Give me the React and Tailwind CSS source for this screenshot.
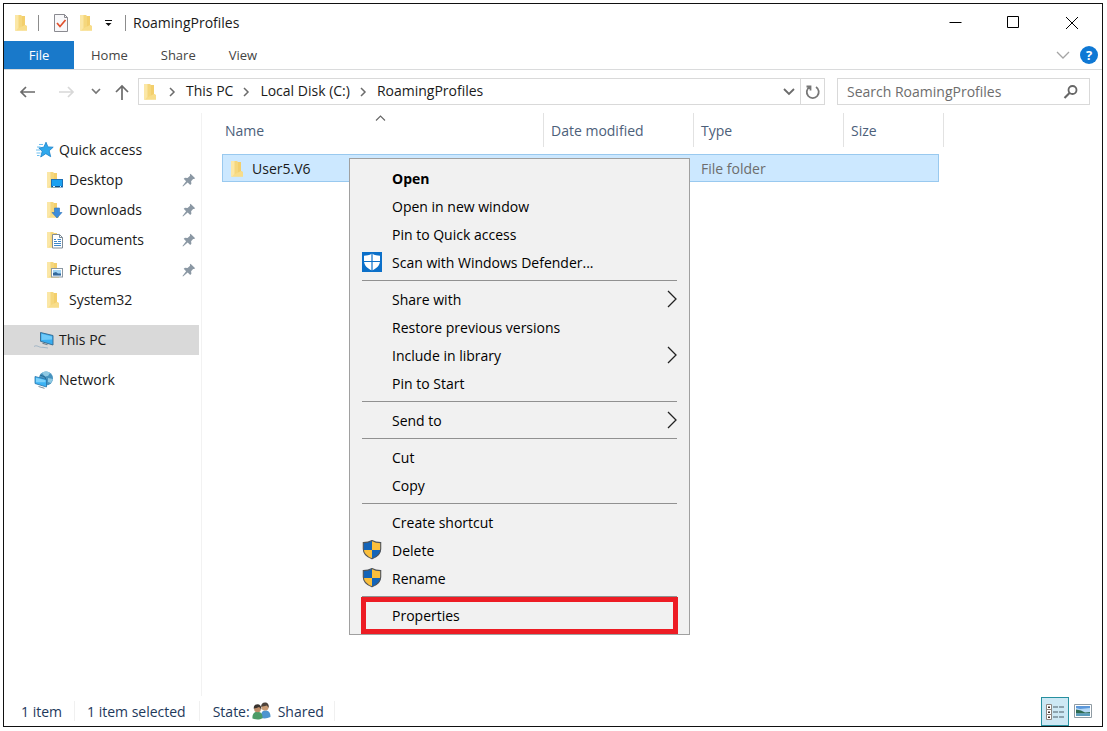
import React from 'react';

const FolderShape = () => (
  <>
    <path d="M1 1h6l1 1h3v9l2 1v4.500H1z" fill="#f5d77d" />
    <path d="M1 1h3.500v15.500H1z" fill="#fbe7a6" />
    <path d="M8 2h3v9.500L9.500 14 8 16.500z" fill="#f3cf6c" />
    <path d="M4 14.500l7-3.500 2 1.200v4.300H2z" fill="#f8dd8a" />
  </>
);

const Folder = () => (
  <svg width="14" height="18" viewBox="0 0 14 18" className="shrink-0" aria-hidden="true">
    <FolderShape />
  </svg>
);

const overlays = {
  desktop: (
    <g>
      <rect x="5.500" y="8.500" width="11" height="7.500" fill="#1ba1f0" stroke="#1c6fb5" />
      <path d="M6 15.500h10" stroke="#0d4f8b" />
      <path d="M7 15.500h2M14 15.500h1" stroke="#d6efff" />
    </g>
  ),
  downloads: <path d="M8.500 7h5v4.500H16L11 17 6 11.500h2.500z" fill="#3c8ddc" stroke="#2c70b8" strokeWidth=".6" />,
  documents: (
    <g>
      <path d="M6.500 3.500h7l3 3v10.500h-10z" fill="#fff" stroke="#7f8c97" />
      <path d="M13.500 3.500v3h3" fill="none" stroke="#7f8c97" />
      <path d="M8 8.500h2M11.500 8.500H15M8 10.500h3M12 10.500h3M8 12.500h7M8 14.500h7" stroke="#3c86c8" />
    </g>
  ),
  pictures: (
    <g>
      <rect x="5.500" y="7.500" width="11" height="8.500" fill="#fff" stroke="#8b98a3" />
      <path d="M7 9h8v5.500H7z" fill="#9fd3f4" />
      <path d="M7 12l3-1 2 1.500h3v2H7z" fill="#34699c" />
    </g>
  ),
};

const NavFolder = ({ kind }) => (
  <svg width="18" height="18" viewBox="0 0 18 18" className="shrink-0" aria-hidden="true">
    <FolderShape />
    {overlays[kind]}
  </svg>
);

const QuickStar = () => (
  <svg width="18" height="18" viewBox="0 0 18 18" className="shrink-0" aria-hidden="true">
    <path d="M10 1.200l1.900 4.700 5.300.3-4 3.600 1.500 5.900-4.900-3L4.700 16l1.500-5.700L2.800 7l5-.8z" fill="#2fa8ec" stroke="#1c80c8" strokeWidth=".8" />
    <path d="M3 3.500h4M1 6h3.500M0 9h4M.5 12h4M1 14.500h2.500" stroke="#5bb8ee" strokeWidth=".9" />
  </svg>
);

const ThisPc = () => (
  <svg width="20" height="18" viewBox="0 0 20 18" className="shrink-0" aria-hidden="true">
    <path d="M6.500 1.500l12.500 3v9.500L6.500 10.300z" fill="#38adf0" stroke="#31688f" strokeWidth=".9" />
    <path d="M7.500 2.800l10.500 2.600v3L7.500 9z" fill="#6fcaf9" />
    <path d="M8.500 12.200l5 1.500" stroke="#6d7d89" strokeWidth="1.200" />
    <path d="M0 15.500c3-2.200 5 1.500 9 .8l5 .7" fill="none" stroke="#a3b6c6" />
  </svg>
);

const Network = () => (
  <svg width="20" height="20" viewBox="0 0 20 20" className="shrink-0" aria-hidden="true">
    <circle cx="12" cy="8.500" r="7" fill="#4793bf" />
    <path d="M8 3c2-2 6-2 8 0l-2 3-3 .5zM14 8l5 1-2 4-3-1z" fill="#8fc9e3" />
    <path d="M6 5l5 2 1 3" stroke="#276a94" fill="none" />
    <path d="M1 6.500l11.500 3v7.500L1 13.500z" fill="#3db3f4" stroke="#2874a8" strokeWidth=".8" />
    <path d="M2 7.800l9.500 2.500v2L2 12.300z" fill="#7dd2fb" />
    <path d="M4.500 16.500l6 1.800" stroke="#7b8d9a" />
  </svg>
);

const Pin = () => (
  <svg width="14" height="14" viewBox="0 0 14 14" className="shrink-0" aria-hidden="true">
    <path d="M8.500.8l4.700 4.400-1.300.9-.8-.2-2 2.300.3 2.600-1.200 1.300-2.500-2.500L1 13.500l-.5-.6 3.600-4.700L1.700 5.700l1.300-1 2.500.2 2.600-2.100-.3-1.100z" fill="#8b98a4" />
  </svg>
);

const Chevron = ({ d, w, h, stroke = '#6b6b6b', sw = 1.5 }) => (
  <svg width={w} height={h} viewBox={`0 0 ${w} ${h}`} className="shrink-0" fill="none" stroke={stroke} strokeWidth={sw} aria-hidden="true">
    <path d={d} />
  </svg>
);

const Shield = () => (
  <svg width="20" height="20" viewBox="0 0 20 20" aria-hidden="true">
    <clipPath id="uac">
      <path d="M10 .5C7.500 2 4.500 2.600 1.300 2.600V9c0 5.200 3.900 8 8.700 9.800C14.800 17 18.700 14.200 18.700 9V2.600C15.500 2.600 12.500 2 10 .5z" />
    </clipPath>
    <g clipPath="url(#uac)">
      <path d="M0 0h10v10H0zM10 10h10v10H10z" fill="#1464b8" />
      <path d="M10 0h10v10H10zM0 10h10v10H0z" fill="#fbbf3c" />
    </g>
    <path d="M10 .5C7.500 2 4.500 2.600 1.300 2.600V9c0 5.200 3.900 8 8.700 9.800C14.800 17 18.700 14.200 18.700 9V2.600C15.500 2.600 12.500 2 10 .5z" fill="none" stroke="#51555a" strokeWidth="1.100" />
  </svg>
);

const Defender = () => (
  <svg width="20" height="20" viewBox="0 0 20 20" aria-hidden="true">
    <path d="M0 0h20v20H0z" fill="#0c70c9" />
    <path d="M10 1.500C8 3 5.200 3.700 2 3.700V9c0 4.500 3.500 7.600 8 9.500 4.500-1.900 8-5 8-9.500V3.700C14.800 3.700 12 3 10 1.500z" fill="#fff" />
    <path d="M10 1v18M2 9.500h16" stroke="#0c70c9" strokeWidth="1.200" />
  </svg>
);

const People = () => (
  <svg width="19" height="18" viewBox="0 0 19 18" className="shrink-0" aria-hidden="true">
    <path d="M9 16c-.5-5 1-7.500 4.500-7.500S18.500 11 18.500 15c-3 1.500-6 1.800-9.500 1z" fill="#4d94cf" />
    <circle cx="13" cy="5" r="3.600" fill="#c99b74" />
    <path d="M9.200 5c-.2-3 1.300-4.600 3.800-4.600S17 2 16.800 6c-1-1.500-1.300-2-2.300-2.500-2 .8-3.500.5-5.300 1.500z" fill="#4c423b" />
    <path d="M.5 16.500C0 12 2 9.800 5.500 9.800s5.300 2.500 5 6.500c-3 1.700-7 1.500-10 .2z" fill="#4c9a66" />
    <circle cx="5.500" cy="6.800" r="3.500" fill="#bd8d68" />
    <path d="M1.800 6.800C1.500 4 3 2.300 5.500 2.300S9.500 4 9.300 7.500C8.500 6.300 8 5.500 7 5c-1.500 1-3.500.8-5.200 1.800z" fill="#39332f" />
  </svg>
);

const navItems = [
  { label: 'Desktop', kind: 'desktop', pinned: true },
  { label: 'Downloads', kind: 'downloads', pinned: true },
  { label: 'Documents', kind: 'documents', pinned: true },
  { label: 'Pictures', kind: 'pictures', pinned: true },
  { label: 'System32', kind: 'plain', pinned: false },
];

const menuGroups = [
  [
    { label: 'Open', bold: true },
    { label: 'Open in new window' },
    { label: 'Pin to Quick access' },
    { label: 'Scan with Windows Defender...', icon: <Defender /> },
  ],
  [
    { label: 'Share with', sub: true },
    { label: 'Restore previous versions' },
    { label: 'Include in library', sub: true },
    { label: 'Pin to Start' },
  ],
  [{ label: 'Send to', sub: true }],
  [{ label: 'Cut' }, { label: 'Copy' }],
  [
    { label: 'Create shortcut' },
    { label: 'Delete', icon: <Shield /> },
    { label: 'Rename', icon: <Shield /> },
  ],
  [{ label: 'Properties', marked: true }],
];

function TitleBar() {
  return (
    <header className="flex h-[37px] items-center">
      <div className="flex flex-1 items-center pl-2.5">
        <Folder />
        <span className="ml-2.5 h-4 w-px bg-[#8c8c8c]" />
        <button type="button" aria-label="Properties" className="ml-3.5">
          <svg width="16" height="18" viewBox="0 0 16 18" aria-hidden="true">
            <path d="M1.500.5h10l3 3v14h-13z" fill="#f8f8fa" stroke="#8a8a90" />
            <path d="M11.500.5v3h3" fill="none" stroke="#8a8a90" />
            <path d="M4 9l3 3.500L12.500 6" fill="none" stroke="#e0502c" strokeWidth="1.700" />
          </svg>
        </button>
        <button type="button" aria-label="New folder" className="ml-2.5">
          <Folder />
        </button>
        <button type="button" aria-label="Customize Quick Access Toolbar" className="ml-[11px]">
          <svg width="9" height="9" viewBox="0 0 9 9" aria-hidden="true">
            <path d="M1 2h7v1H1zM1.500 5h6L4.500 8z" fill="#111" />
          </svg>
        </button>
        <span className="ml-3 h-4 w-px bg-[#8c8c8c]" />
        <h1 className="ml-[7px]">RoamingProfiles</h1>
      </div>
      <div className="flex h-full pr-px">
        {[
          ['Minimize', 'M2.500 8.500h12'],
          ['Maximize', 'M2.500 2.500h11v11h-11z'],
          ['Close', 'M3 3l12 12M15 3L3 15'],
        ].map(([name, d]) => (
          <button key={name} type="button" aria-label={name} className="flex w-[58px] items-center justify-center">
            <svg width="18" height="18" viewBox="0 0 18 18" fill="none" stroke="#000" strokeWidth="1" aria-hidden="true">
              <path d={d} />
            </svg>
          </button>
        ))}
      </div>
    </header>
  );
}

function Ribbon() {
  return (
    <div className="flex h-[29px] border-b border-[#dadbdc] text-[13px] text-[#444]">
      <button type="button" className="w-[70px] bg-[#1979ca] text-white">File</button>
      {['Home', 'Share', 'View'].map((t) => (
        <button key={t} type="button" className="pl-[17px] pr-4">{t}</button>
      ))}
      <div className="ml-auto flex items-center gap-2.5 pr-1">
        <button type="button" aria-label="Expand the Ribbon">
          <Chevron w={14} h={8} d="M1 1l6 6 6-6" stroke="#a5a5a5" sw={1.3} />
        </button>
        <button type="button" aria-label="Help" className="flex size-[18px] items-center justify-center rounded-full bg-[#0f78d4] text-[13px] font-bold text-white">
          ?
        </button>
      </div>
    </div>
  );
}

function AddressRow() {
  return (
    <div className="flex h-[43px] items-center pr-3">
      <div className="flex w-[134px] shrink-0 items-center pl-[15px]">
        <button type="button" aria-label="Back">
          <svg width="17" height="14" viewBox="0 0 17 14" fill="none" stroke="#6b6b6b" strokeWidth="1.700" aria-hidden="true"><path d="M16 7H2M7 2L2 7l5 5" /></svg>
        </button>
        <button type="button" aria-label="Forward" className="ml-[22px]">
          <svg width="17" height="14" viewBox="0 0 17 14" fill="none" stroke="#d8d8d8" strokeWidth="1.700" aria-hidden="true"><path d="M1 7h14M10 2l5 5-5 5" /></svg>
        </button>
        <button type="button" aria-label="Recent locations" className="ml-4">
          <Chevron w={10} h={7} d="M1 1l4 4 4-4" stroke="#777" sw={1.7} />
        </button>
        <button type="button" aria-label="Up" className="ml-[13px]">
          <svg width="16" height="16" viewBox="0 0 16 16" fill="none" stroke="#6b6b6b" strokeWidth="1.700" aria-hidden="true"><path d="M8 16V2M2 8l6-6 6 6" /></svg>
        </button>
      </div>
      <div className="flex h-[27px] min-w-0 flex-1 items-center border border-[#d9d9d9]">
        <span className="ml-1 mr-3 flex"><Folder /></span>
        {['This PC', 'Local Disk (C:)', 'RoamingProfiles'].map((c) => (
          <React.Fragment key={c}>
            <Chevron w={7} h={10} d="M1 1l4 4-4 4" />
            <button type="button" className="mx-2.5 whitespace-nowrap pb-0.5">{c}</button>
          </React.Fragment>
        ))}
        <button type="button" aria-label="Previous locations" className="ml-auto mr-1 flex">
          <Chevron w={14} h={9} d="M2 2l5 5 5-5" sw={1.8} />
        </button>
        <button type="button" aria-label="Refresh" className="flex h-full w-6 items-center justify-center border-l border-[#d9d9d9]">
          <svg width="16" height="16" viewBox="0 0 16 16" fill="none" stroke="#777" strokeWidth="1.800" aria-hidden="true">
            <path d="M11 3a6 6 0 1 1-6.500 0M1.500 2.500h4v4" />
          </svg>
        </button>
      </div>
      <label className="ml-3 flex h-[27px] w-[253px] shrink-0 items-center border border-[#d9d9d9] pl-[9px] pr-2.5">
        <input aria-label="Search RoamingProfiles" placeholder="Search RoamingProfiles" className="min-w-0 flex-1 bg-transparent outline-none placeholder:text-[#6d6d6d]" />
        <svg width="16" height="16" viewBox="0 0 16 16" fill="none" stroke="#666" aria-hidden="true">
          <circle cx="9.500" cy="6" r="4" strokeWidth="1.800" />
          <path d="M6.500 9L1.500 14" strokeWidth="2.200" />
        </svg>
      </label>
    </div>
  );
}

function NavPane() {
  const row = 'flex h-[30px] items-center';
  return (
    <nav aria-label="Navigation pane" className="w-[198px] shrink-0 border-r border-[#f2f2f2] pt-[22px]">
      <a href="#quick" className={`${row} gap-[5px] pl-8`}><QuickStar />Quick access</a>
      {navItems.map((i) => (
        <a key={i.label} href="#folder" className={`${row} gap-[5px] pl-[42px] pr-[5px]`}>
          <NavFolder kind={i.kind} />
          <span className="flex-1">{i.label}</span>
          {i.pinned && <Pin />}
        </a>
      ))}
      <a href="#pc" className={`${row} mr-[2px] mt-2.5 gap-[5px] bg-[#d9d9d9] pl-[30px]`}><ThisPc />This PC</a>
      <a href="#network" className={`${row} mt-2.5 gap-[5px] pl-[30px]`}><Network />Network</a>
    </nav>
  );
}

function FileList() {
  const th = 'p-0 pb-[7px] font-normal text-[#4c607a]';
  const head = 'flex h-[34px] items-center border-r border-[#e2e2e2] pt-0.5';
  const td = 'h-7 border-y border-[#99c9ef] bg-[#cce8ff] p-0 pt-px';
  return (
    <main className="min-w-0 flex-1 pl-5">
      <table className="w-[722px] table-fixed border-separate border-spacing-0 text-left">
        <colgroup>
          <col className="w-[322px]" />
          <col className="w-[150px]" />
          <col className="w-[150px]" />
          <col className="w-[95px]" />
          <col className="w-[5px]" />
        </colgroup>
        <thead>
          <tr>
            <th className={th}>
              <div className={`${head} relative pl-[3px]`}>
                Name
                <span className="absolute left-[153px] top-0.5 flex"><Chevron w={11} h={6} d="M1 5.500l4.500-4.500L10 5.500" stroke="#666" sw={1.1} /></span>
              </div>
            </th>
            <th className={th}><div className={`${head} pl-[7px]`}>Date modified</div></th>
            <th className={th}><div className={`${head} pl-[7px]`}>Type</div></th>
            <th colSpan={2} className={th}><div className={`${head} pl-[7px]`}>Size</div></th>
          </tr>
        </thead>
        <tbody>
          <tr>
            <td className={`${td} border-l`}>
              <div className="flex items-center gap-2 pl-[7px] text-[#1a1a1a]"><Folder />User5.V6</div>
            </td>
            <td className={td} />
            <td className={`${td} pl-[7px] text-[#6d6d6d]`}>File folder</td>
            <td className={`${td} border-r`} />
            <td className="p-0" />
          </tr>
        </tbody>
      </table>
    </main>
  );
}

function ContextMenu() {
  return (
    <div role="menu" className="absolute left-[345px] top-[154px] w-[341px] border border-[#a0a0a0] bg-[#f1f1f1] pb-1 pt-1.5 text-black">
      {menuGroups.map((group, g) => (
        <React.Fragment key={group[0].label}>
          {g > 0 && <div role="separator" className="mx-3 mb-[5px] mt-[3px] h-px bg-[#919191]" />}
          {group.map((i) => (
            <button key={i.label} type="button" role="menuitem" className="relative flex h-7 w-full items-center px-3 text-left">
              <span className="mr-2.5 flex w-5 shrink-0 pb-0.5">{i.icon}</span>
              <span className={i.bold ? 'flex-1 font-bold' : 'flex-1'}>{i.label}</span>
              {i.sub && <span className="flex pb-0.5"><Chevron w={11} h={18} d="M2 1l8 8-8 8" stroke="#222" sw={1.3} /></span>}
              {i.marked && <span className="absolute -bottom-1 -top-[5px] left-[11px] right-[11px] border-[5px] border-[#ed1c24]" />}
            </button>
          ))}
        </React.Fragment>
      ))}
    </div>
  );
}

function StatusBar() {
  const sep = 'h-5 w-px bg-[#f0f0f0]';
  return (
    <footer className="flex h-[30px] items-center text-[#1e395b]">
      <span className="ml-[17px] pt-0.5">1 item</span>
      <span className={`${sep} mx-3`} />
      <span className="pt-0.5">1 item selected</span>
      <span className={`${sep} mx-[13px]`} />
      <span className="mr-0.5 pt-0.5">State:</span>
      <People />
      <span className="ml-[7px] pt-0.5">Shared</span>
      <span className={`${sep} mx-2.5`} />
      <button type="button" aria-label="Details view" className="ml-auto mt-px flex h-[29px] w-7 items-center justify-center border border-[#26909f] bg-[#cde8f4]">
        <svg width="20" height="18" viewBox="0 0 20 18" aria-hidden="true">
          <path d="M1.500 1.500h5v5h-5zM1.500 6.500h5v5h-5zM1.500 11.500h5v5h-5z" fill="#fff" stroke="#8d8580" />
          <path d="M3 3.500h2v1.500H3zM3 8.500h2V10H3zM3 13.500h2V15H3z" fill="#42302b" />
          <path d="M8 4h5M14 4h5M8 9h5M14 9h5M8 14h5M14 14h5" stroke="#4f5f69" strokeWidth="1.200" />
        </svg>
      </button>
      <button type="button" aria-label="Large icons view" className="ml-[5px] mr-2.5">
        <svg width="18" height="14" viewBox="0 0 18 14" aria-hidden="true">
          <path d="M.5.5h17v13H.5z" fill="#fff" stroke="#8f9ba3" />
          <path d="M2 2h14v10H2z" fill="#b5d8f5" />
          <path d="M2 2h14v2L6 5 2 4z" fill="#5c98da" />
          <path d="M2 5.500l5 1 4 2 5-.5v1.500H2z" fill="#2d6a50" />
          <path d="M2 9.500h14V12H2z" fill="#5a9cbc" />
        </svg>
      </button>
    </footer>
  );
}

export default function App() {
  return (
    <div className="flex min-h-screen bg-white pb-1 pl-[3px] pr-1 pt-[3px] font-['Open_Sans','Noto_Sans',sans-serif] text-[14px] leading-5 text-[#1a1a1a]">
      <div className="relative flex min-w-0 flex-1 flex-col border border-[#111] bg-white">
        <TitleBar />
        <Ribbon />
        <AddressRow />
        <div className="flex flex-1">
          <NavPane />
          <FileList />
        </div>
        <StatusBar />
        <ContextMenu />
      </div>
    </div>
  );
}
